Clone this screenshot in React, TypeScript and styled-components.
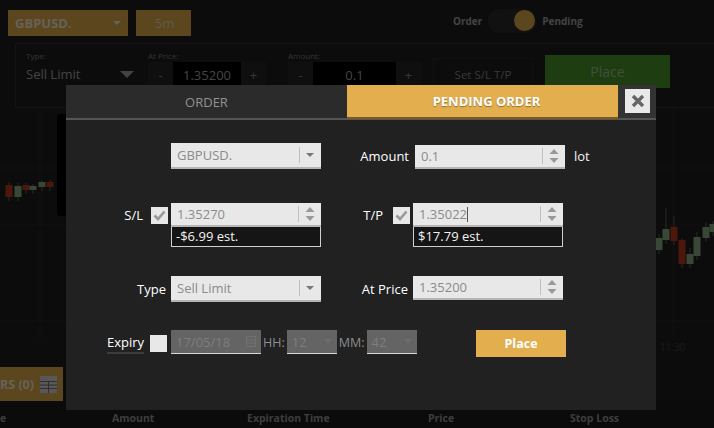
import React from 'react';
import styled, { createGlobalStyle } from 'styled-components';

const GlobalStyle = createGlobalStyle`
  html, body {
    margin: 0;
    padding: 0;
    background: #202020;
  }
  * {
    box-sizing: border-box;
  }
`;

const Page = styled.div`
  position: relative;
  width: 714px;
  height: 428px;
  overflow: hidden;
  display: flex;
  flex-direction: column;
  background: #202020;
  font-family: 'Open Sans', 'Liberation Sans', sans-serif;
`;

const TopBar = styled.div`
  height: 43px;
  flex: none;
  padding: 10px 8px 0;
  display: flex;
  gap: 8px;
`;

const GoldChip = styled.div<{ $width: number; $center?: boolean }>`
  width: ${(p) => p.$width}px;
  height: 26px;
  padding: 0 5px 0 7px;
  display: flex;
  align-items: center;
  justify-content: ${(p) => (p.$center ? 'center' : 'space-between')};
  background: #e3ae4d;
  color: ${(p) => (p.$center ? '#f0e0b8' : '#fff4dc')};
  font-size: 13px;
  font-weight: ${(p) => (p.$center ? 400 : 700)};
`;

const Toggle = styled.div`
  margin-left: 254px;
  height: 22px;
  display: flex;
  align-items: center;
  gap: 6px;
  color: #a8a8a8;
  font-size: 10px;
  font-weight: 700;
`;

const ToggleTrack = styled.div`
  width: 48px;
  height: 24px;
  border-radius: 12px;
  background: #2c2c2c;
  display: flex;
  justify-content: flex-end;
  padding: 1px 1px;
`;

const ToggleKnob = styled.div`
  width: 21px;
  height: 21px;
  border-radius: 50%;
  background: #e3ae4d;
`;

const OrderPanel = styled.div`
  height: 65px;
  flex: none;
  margin-left: 15px;
  padding: 6px 0 0 10px;
  display: flex;
  border-top: 1px solid #333;
  border-left: 1px solid #333;
  border-bottom: 1px solid #333;
`;

const PanelField = styled.div<{ $width: number }>`
  width: ${(p) => p.$width}px;
  display: flex;
  flex-direction: column;
  color: #808080;
  font-size: 8px;
`;

const TypeValue = styled.div`
  width: 108px;
  display: flex;
  justify-content: space-between;
  align-items: center;
  margin-top: 4px;
  color: #a8a8a8;
  font-size: 13px;
`;

const TypeCaret = styled.div`
  width: 0;
  height: 0;
  border-left: 7px solid transparent;
  border-right: 7px solid transparent;
  border-top: 7px solid #a8a8a8;
`;

const Stepper = styled.div<{ $width: number }>`
  width: ${(p) => p.$width}px;
  height: 26px;
  margin-top: 1px;
  display: flex;
  align-items: center;
  background: #000;
  color: #aaa;
  font-size: 13px;
`;

const StepButton = styled.div`
  width: 25px;
  height: 100%;
  display: flex;
  align-items: center;
  justify-content: center;
  background: #262626;
  color: #888;
`;

const StepValue = styled.div`
  flex: 1;
  text-align: center;
`;

const SetLink = styled.div`
  width: 100px;
  height: 32px;
  margin: 8px 12px 0 0;
  display: flex;
  align-items: center;
  justify-content: center;
  border: 1px solid #2c2c2c;
  color: #8c8c8c;
  font-size: 11.5px;
`;

const GreenPlace = styled.div`
  width: 125px;
  height: 33px;
  margin-top: 5px;
  display: flex;
  align-items: center;
  justify-content: center;
  background: #4b9a29;
  color: #a4c498;
  font-size: 14px;
`;

const Chart = styled.div`
  flex: 1;
  min-height: 0;
  svg {
    display: block;
  }
`;

const PositionsRow = styled.div`
  height: 34px;
  flex: none;
  display: flex;
`;

const PositionsButton = styled.div`
  width: 63px;
  display: flex;
  align-items: center;
  justify-content: space-between;
  padding-right: 6px;
  background: #e3ae4d;
  color: #fff4dc;
  font-size: 12.5px;
  font-weight: 700;
  white-space: nowrap;
`;

const TableHeader = styled.div`
  height: 27px;
  flex: none;
  display: grid;
  grid-template-columns: 112px 135px 181px 142px 1fr;
  align-items: end;
  padding-bottom: 3px;
  background: #1c1c1c;
  color: #9a9a9a;
  font-size: 10.5px;
  font-weight: 700;
`;

const Overlay = styled.div`
  position: absolute;
  inset: 0;
  background: rgba(0, 0, 0, 0.6);
`;

const Modal = styled.div`
  position: absolute;
  left: 66px;
  top: 85px;
  width: 590px;
  height: 325px;
  background: #212121;
  display: flex;
  flex-direction: column;
`;

const Tabs = styled.div`
  height: 35px;
  flex: none;
  display: flex;
  background: #333;
  border-bottom: 2px solid #555;
`;

const Tab = styled.div<{ $active?: boolean }>`
  width: ${(p) => (p.$active ? 271 : 281)}px;
  height: ${(p) => (p.$active ? 34 : 33)}px;
  padding-left: ${(p) => (p.$active ? 8 : 0)}px;
  display: flex;
  align-items: center;
  justify-content: center;
  background: ${(p) => (p.$active ? '#e3ae4d' : '#2b2b2b')};
  border-bottom: ${(p) => (p.$active ? '2px solid #7a5c22' : 'none')};
  color: ${(p) => (p.$active ? '#fff' : '#929292')};
  font-size: 13px;
  font-weight: ${(p) => (p.$active ? 700 : 400)};
  ${(p) => (p.$active ? 'text-shadow: 0 1px 1px rgba(0,0,0,0.35);' : '')}
`;

const CloseBox = styled.div`
  flex: 1;
  display: flex;
  justify-content: flex-start;
  padding: 4px 0 0 7px;
`;

const CloseButton = styled.div`
  width: 25px;
  height: 24px;
  display: flex;
  align-items: center;
  justify-content: center;
  background: #e9e9e9;
`;

const FormRow = styled.div<{ $top: number }>`
  margin-top: ${(p) => p.$top}px;
  display: flex;
  align-items: flex-start;
`;

const LabelCell = styled.div<{ $width: number; $pad?: number; $gap?: number; $height?: number }>`
  width: ${(p) => p.$width}px;
  height: ${(p) => p.$height ?? 26}px;
  padding-right: ${(p) => p.$pad ?? 3}px;
  display: flex;
  align-items: center;
  justify-content: flex-end;
  gap: ${(p) => p.$gap ?? 8}px;
  color: #fff;
  font-size: 13px;
`;

const Stack = styled.div`
  width: 150px;
  display: flex;
  flex-direction: column;
`;

const Field = styled.div`
  width: 150px;
  height: 26px;
  padding: 0 5px 0 6px;
  display: flex;
  align-items: center;
  justify-content: space-between;
  background: #e8e8e8;
  border-bottom: 2px solid #b5b5b5;
  color: #8b8b8b;
  font-size: 13px;
`;

const SpinField = styled(Field)<{ $nudge?: number }>`
  height: 24px;
  margin-top: ${(p) => p.$nudge ?? 0}px;
`;

const FieldEnd = styled.div`
  display: flex;
  align-items: center;
  gap: 5px;
  height: 18px;
  &::before {
    content: '';
    width: 1px;
    height: 16px;
    background: #c0c0c0;
  }
`;

const Estimate = styled.div`
  height: 20px;
  padding: 0 4px;
  background: #151515;
  border: 1px solid #d0d0d0;
  border-top: none;
  color: #f2f2f2;
  font-size: 13px;
  line-height: 18px;
`;

const Caret = styled.div<{ $color?: string }>`
  margin: 0 2px 0 1px;
  width: 0;
  height: 0;
  border-left: 4px solid transparent;
  border-right: 4px solid transparent;
  border-top: 4px solid ${(p) => p.$color ?? '#777'};
`;

const CheckBox = styled.div`
  width: 17px;
  height: 17px;
  display: flex;
  align-items: center;
  justify-content: center;
  background: #e8e8e8;
`;

const Unit = styled.div`
  height: 26px;
  margin-left: 9px;
  display: flex;
  align-items: center;
  color: #f2f2f2;
  font-size: 13px;
`;

const Cursor = styled.span`
  display: inline-block;
  width: 1px;
  height: 15px;
  vertical-align: -3px;
  background: #555;
`;

const ExpiryLabel = styled.span`
  padding-bottom: 1px;
  border-bottom: 2px solid #3d3d3d;
`;

const ExpiryGroup = styled.div`
  width: 305px;
  display: flex;
  align-items: center;
  gap: 2px;
  height: 24px;
  color: #8d8d8d;
  font-size: 12.5px;
`;

const DisabledField = styled.div<{ $width: number }>`
  width: ${(p) => p.$width}px;
  height: 24px;
  padding: 0 5px;
  display: flex;
  align-items: center;
  justify-content: space-between;
  background: #646464;
  border-bottom: 1px solid #d8d8d8;
  color: #7e7e7e;
  font-size: 13px;
`;

const PlaceButton = styled.div`
  width: 90px;
  height: 27px;
  display: flex;
  align-items: center;
  justify-content: center;
  background: #e3ae4d;
  color: #fff;
  font-size: 12.5px;
  font-weight: 700;
`;

const GREEN = '#8fb488';
const RED = '#c23a1c';

// y values are page coordinates, the chart starts at y 108
const CHART_TOP = 108;
const candles = [
  { x: 9, open: 185, close: 197, wick: 182, color: RED },
  { x: 18, open: 186, close: 197, wick: 183, color: GREEN },
  { x: 26, open: 185, close: 190, wick: 183, color: RED },
  { x: 33, open: 186, close: 190, wick: 184, color: GREEN },
  { x: 42, open: 182, close: 187, wick: 180, color: GREEN },
  { x: 50, open: 182, close: 187, wick: 180, color: RED },
  { x: 659, open: 238, close: 250, wick: 234, color: GREEN },
  { x: 666, open: 229, close: 240, wick: 208, color: GREEN },
  { x: 674, open: 227, close: 241, wick: 216, color: RED },
  { x: 682, open: 240, close: 264, wick: 238, color: RED },
  { x: 690, open: 254, close: 264, wick: 248, color: GREEN },
  { x: 697, open: 237, close: 256, wick: 232, color: GREEN },
  { x: 706, open: 227, close: 238, wick: 222, color: GREEN },
  { x: 713, open: 224, close: 232, wick: 221, color: GREEN },
];

const Spinner = () => (
  <svg width="12" height="18" viewBox="0 0 12 18">
    <path d="M6 2 L10.5 7 H1.5 Z M6 16 L10.5 11 H1.5 Z" fill="#999" />
  </svg>
);

const Check = () => (
  <svg width="13" height="11" viewBox="0 0 13 11">
    <path d="M1.5 5.5 L5 9 L11.5 1.5" fill="none" stroke="#999" strokeWidth="2.6" />
  </svg>
);

const FaintCalendar = () => (
  <svg width="10" height="11" viewBox="0 0 10 11">
    <rect x="0.5" y="0.5" width="9" height="10" fill="none" stroke="#707070" />
    <path d="M0 4 H10 M0 7 H10" stroke="#707070" />
  </svg>
);

const FaintCaret = () => (
  <svg width="8" height="5" viewBox="0 0 8 5">
    <path d="M0 0 H8 L4 5 Z" fill="#6d6d6d" />
  </svg>
);

const Candles = () => (
  <svg width="714" height="259" viewBox="0 0 714 259">
    {[60, 117, 213].map((y) => (
      <line key={y} x1="0" x2="714" y1={y} y2={y} stroke="#2a2a2a" />
    ))}
    {[40, 673].map((x) => (
      <line key={x} x1={x} x2={x} y1="0" y2="232" stroke="#2a2a2a" />
    ))}
    <rect x="57" y="6" width="12" height="102" rx="3" fill="#000" />
    {candles.map((c) => (
      <g key={c.x}>
        <line
          x1={c.x}
          x2={c.x}
          y1={c.wick - CHART_TOP}
          y2={c.close - CHART_TOP + 4}
          stroke="#666"
        />
        <rect
          x={c.x - 3.5}
          y={c.open - CHART_TOP}
          width="7"
          height={c.close - c.open}
          fill={c.color}
        />
      </g>
    ))}
    <text x="660" y="243" fill="#444" fontSize="10" fontFamily="Open Sans, sans-serif">
      11:30
    </text>
  </svg>
);

const App = () => {
  return (
    <Page>
      <GlobalStyle />
      <TopBar>
        <GoldChip $width={120}>
          GBPUSD.
          <Caret $color="#fff4dc" />
        </GoldChip>
        <GoldChip $width={55} $center>
          5m
        </GoldChip>
        <Toggle>
          Order
          <ToggleTrack>
            <ToggleKnob />
          </ToggleTrack>
          Pending
        </Toggle>
      </TopBar>
      <OrderPanel>
        <PanelField $width={122}>
          Type:
          <TypeValue>
            Sell Limit
            <TypeCaret />
          </TypeValue>
        </PanelField>
        <PanelField $width={140}>
          At Price:
          <Stepper $width={118}>
            <StepButton>-</StepButton>
            <StepValue>1.35200</StepValue>
            <StepButton>+</StepButton>
          </Stepper>
        </PanelField>
        <PanelField $width={145}>
          Amount:
          <Stepper $width={133}>
            <StepButton>-</StepButton>
            <StepValue>0.1</StepValue>
            <StepButton>+</StepButton>
          </Stepper>
        </PanelField>
        <SetLink>Set S/L T/P</SetLink>
        <GreenPlace>Place</GreenPlace>
      </OrderPanel>
      <Chart>
        <Candles />
      </Chart>
      <PositionsRow>
        <PositionsButton>
          RS (0)
          <svg width="17" height="17" viewBox="0 0 17 17">
            <rect width="17" height="17" fill="#ddd" />
            <path d="M0 5.5 H17 M0 9 H17 M0 12.5 H17 M8.5 5 V17" stroke="#777" />
          </svg>
        </PositionsButton>
      </PositionsRow>
      <TableHeader>
        <span>e</span>
        <span>Amount</span>
        <span>Expiration Time</span>
        <span>Price</span>
        <span>Stop Loss</span>
      </TableHeader>
      <Overlay />
      <Modal>
        <Tabs>
          <Tab>ORDER</Tab>
          <Tab $active>PENDING ORDER</Tab>
          <CloseBox>
            <CloseButton>
              <svg width="14" height="14" viewBox="0 0 14 14">
                <path d="M2 2 L12 12 M12 2 L2 12" stroke="#666" strokeWidth="3.4" />
              </svg>
            </CloseButton>
          </CloseBox>
        </Tabs>
        <FormRow $top={23}>
          <LabelCell $width={105} />
          <Field>
            GBPUSD.
            <FieldEnd>
              <Caret />
            </FieldEnd>
          </Field>
          <LabelCell $width={94} $pad={6}>
            Amount
          </LabelCell>
          <SpinField $nudge={2}>
            0.1
            <FieldEnd>
              <Spinner />
            </FieldEnd>
          </SpinField>
          <Unit>lot</Unit>
        </FormRow>
        <FormRow $top={34}>
          <LabelCell $width={105} $height={24}>
            S/L
            <CheckBox>
              <Check />
            </CheckBox>
          </LabelCell>
          <Stack>
            <SpinField>
              1.35270
              <FieldEnd>
                <Spinner />
              </FieldEnd>
            </SpinField>
            <Estimate>-$6.99 est.</Estimate>
          </Stack>
          <LabelCell $width={92} $height={24} $gap={10}>
            T/P
            <CheckBox>
              <Check />
            </CheckBox>
          </LabelCell>
          <Stack>
            <SpinField>
              <span>
                1.35022
                <Cursor />
              </span>
              <FieldEnd>
                <Spinner />
              </FieldEnd>
            </SpinField>
            <Estimate>$17.79 est.</Estimate>
          </Stack>
        </FormRow>
        <FormRow $top={29}>
          <LabelCell $width={105} $pad={5}>
            Type
          </LabelCell>
          <Field>
            Sell Limit
            <FieldEnd>
              <Caret />
            </FieldEnd>
          </Field>
          <LabelCell $width={92} $pad={5}>
            At Price
          </LabelCell>
          <SpinField>
            1.35200
            <FieldEnd>
              <Spinner />
            </FieldEnd>
          </SpinField>
        </FormRow>
        <FormRow $top={28}>
          <LabelCell $width={105} $pad={4} $gap={6}>
            <ExpiryLabel>Expiry</ExpiryLabel>
            <CheckBox />
          </LabelCell>
          <ExpiryGroup>
            <DisabledField $width={90}>
              17/05/18
              <FaintCalendar />
            </DisabledField>
            HH:
            <DisabledField $width={50}>
              12
              <FaintCaret />
            </DisabledField>
            MM:
            <DisabledField $width={50}>
              42
              <FaintCaret />
            </DisabledField>
          </ExpiryGroup>
          <PlaceButton>Place</PlaceButton>
        </FormRow>
      </Modal>
    </Page>
  );
};

export default App;
